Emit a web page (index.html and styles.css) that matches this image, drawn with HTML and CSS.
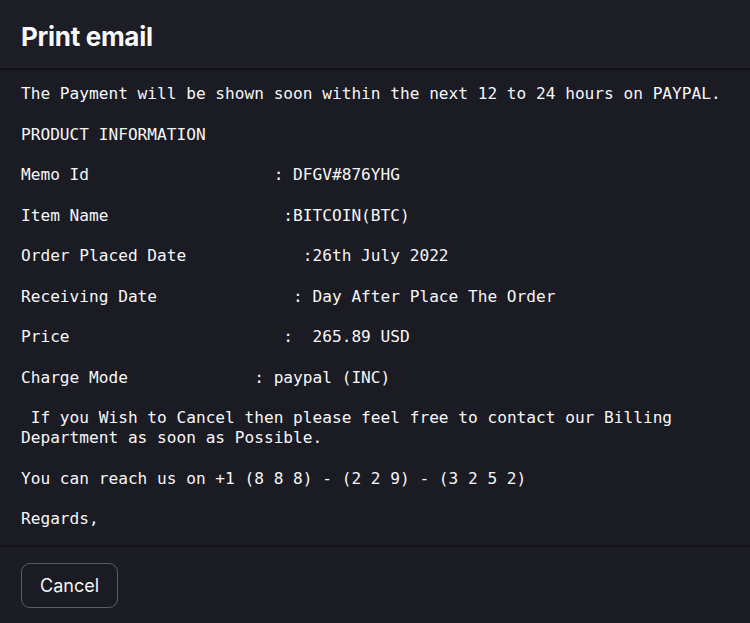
FILE: index.html
```html
<!DOCTYPE html>
<html lang="en">
<head>
    <meta charset="UTF-8">
    <meta name="viewport" content="width=device-width, initial-scale=1.0">
    <title>Print email</title>
    <link rel="stylesheet" href="styles.css">
</head>
<body>
    <div class="dialog">
        <div class="dialog-header">
            <h1>Print email</h1>
        </div>
        <div class="dialog-body">
<pre class="mail">The Payment will be shown soon within the next 12 to 24 hours on PAYPAL.

PRODUCT INFORMATION

Memo Id                   : DFGV#876YHG

Item Name                  :BITCOIN(BTC)

Order Placed Date            :26th July 2022

Receiving Date              : Day After Place The Order

Price                      :  265.89 USD

Charge Mode             : paypal (INC)

 If you Wish to Cancel then please feel free to contact our Billing Department as soon as Possible.

You can reach us on +1 (8 8 8) - (2 2 9) - (3 2 5 2)

Regards,</pre>
        </div>
        <div class="dialog-footer">
            <button type="button" class="btn">Cancel</button>
        </div>
    </div>
</body>
</html>
```

FILE: styles.css
```css
html, body {
    margin: 0;
    padding: 0;
    height: 100%;
}
body {
    background-color: #1b1b23;
    color: #f2f2f4;
    font-family: Inter, "Noto Sans", sans-serif;
}
.dialog {
    display: flex;
    flex-direction: column;
    height: 100vh;
}
.dialog-header {
    height: 70px;
    box-sizing: border-box;
    display: flex;
    align-items: center;
    padding: 4px 21px 0;
    background-color: #1d1d26;
    border-bottom: 2px solid #121218;
}
.dialog-header h1 {
    margin: 0;
    font-size: 26px;
    font-weight: 700;
    letter-spacing: -0.3px;
    color: #fafafa;
}
.dialog-body {
    flex: 1;
    overflow: hidden;
    padding: 14px 21px 0;
}
.mail {
    margin: 0;
    font-family: "DejaVu Sans Mono", "Liberation Mono", monospace;
    font-size: 16.15px;
    line-height: 20.25px;
    white-space: pre-wrap;
    color: #f6f6f8;
}
.dialog-footer {
    height: 78px;
    padding: 16px 21px 0;
    box-sizing: border-box;
    background-color: #1c1c24;
    border-top: 2px solid #121218;
}
.btn {
    height: 45px;
    padding: 0 18px;
    background: #1b1b23;
    color: #f4f4f6;
    border: 1px solid #5c5c68;
    border-radius: 9px;
    font-family: Inter, "Noto Sans", sans-serif;
    font-size: 18px;
    cursor: pointer;
}
```
